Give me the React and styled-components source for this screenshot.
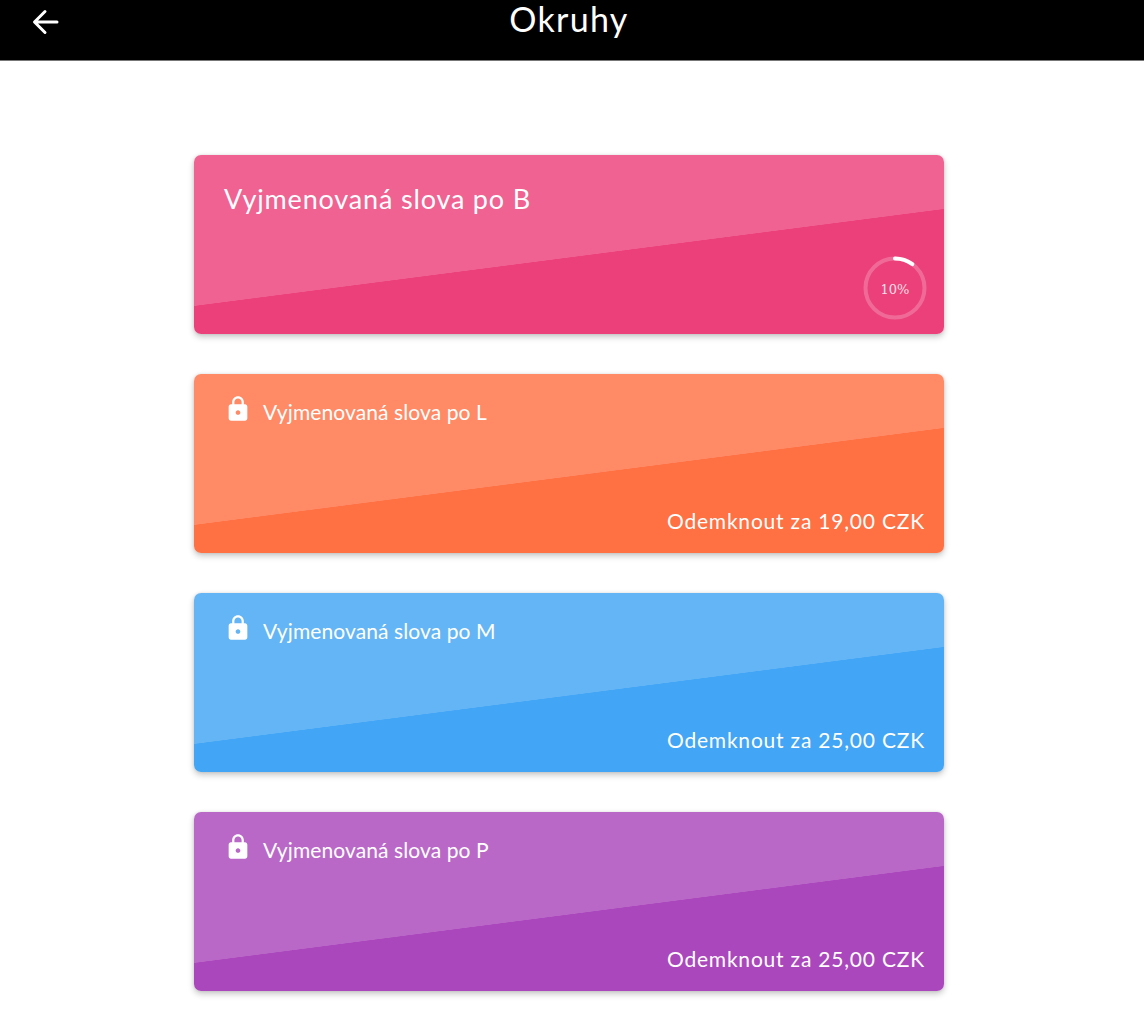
import React from 'react';
import styled, { createGlobalStyle } from 'styled-components';

const Global = createGlobalStyle`
  html, body { margin: 0; padding: 0; background: #ffffff; }
  body { font-family: Lato, "Noto Sans", sans-serif; }
`;

const Page = styled.div`
  min-height: 1011px;
  display: flex;
  flex-direction: column;
`;

const Header = styled.header`
  height: 61px;
  box-sizing: border-box;
  display: grid;
  grid-template-columns: 80px 1fr 86px;
  background: #000000;
  border-bottom: 1px solid #777777;
  color: #ffffff;
`;

const BackButton = styled.button`
  display: flex;
  align-items: flex-start;
  padding: 9px 0 0 32px;
  border: 0;
  background: none;
  color: inherit;
`;

const Title = styled.h1`
  margin: 0;
  text-align: center;
  font-size: 34px;
  line-height: 38px;
  font-weight: 400;
  letter-spacing: 1.3px;
`;

const Content = styled.main`
  padding: 94px 6px 0 0;
`;

const List = styled.div`
  width: 750px;
  margin: 0 auto;
  display: flex;
  flex-direction: column;
  gap: 40px;
`;

const Card = styled.article`
  height: 179px;
  box-sizing: border-box;
  padding: ${(p) => (p.$locked ? '18px 19px 18px 30px' : '25px 17px 14px 30px')};
  display: flex;
  flex-direction: column;
  justify-content: space-between;
  border-radius: 7px;
  color: #ffffff;
  background: linear-gradient(
    -7.37deg,
    ${(p) => p.$dark} 45.2%,
    ${(p) => p.$light} 45.4%
  );
  box-shadow: 0 3px 6px rgba(0, 0, 0, 0.22), 0 0 3px rgba(0, 0, 0, 0.1);
`;

const CardName = styled.h2`
  margin: 0;
  font-size: 27px;
  line-height: 38px;
  font-weight: 400;
  letter-spacing: 0.83px;
`;

const LockedRow = styled.div`
  display: flex;
  align-items: center;
  gap: 11px;
`;

const LockedName = styled.h2`
  margin: 0;
  padding-top: 6px;
  font-size: 21px;
  line-height: 28px;
  font-weight: 400;
  letter-spacing: 0.1px;
`;

const Price = styled.div`
  align-self: flex-end;
  font-size: 21px;
  line-height: 28px;
  letter-spacing: 0.8px;
`;

const RingWrap = styled.div`
  align-self: flex-end;
  position: relative;
  width: 64px;
  height: 64px;
`;

const RingLabel = styled.span`
  position: absolute;
  inset: 2px 0 0;
  display: flex;
  align-items: center;
  justify-content: center;
  font-family: "DejaVu Serif", "Liberation Serif", serif;
  font-size: 13px;
  color: rgba(255, 255, 255, 0.85);
`;

const ArrowIcon = () => (
  <svg width="28" height="26" viewBox="0 0 28 26" fill="none" stroke="currentColor" strokeWidth="3" strokeLinecap="round" strokeLinejoin="round">
    <path d="M25 13H3M13 2.5 2.5 13 13 23.5" />
  </svg>
);

const LockIcon = () => (
  <svg width="28" height="28" viewBox="0 0 24 24" fill="currentColor">
    <path d="M18 8h-1V6c0-2.76-2.24-5-5-5S7 3.24 7 6v2H6c-1.1 0-2 .9-2 2v10c0 1.1.9 2 2 2h12c1.1 0 2-.9 2-2V10c0-1.1-.9-2-2-2zm-6 9c-1.1 0-2-.9-2-2s.9-2 2-2 2 .9 2 2-.9 2-2 2zm3.1-9H8.9V6c0-1.71 1.39-3.1 3.1-3.1 1.71 0 3.1 1.39 3.1 3.1v2z" />
  </svg>
);

const ProgressRing = ({ value }) => {
  const r = 29.5;
  const length = 2 * Math.PI * r;
  return (
    <RingWrap>
      <svg width="64" height="64" viewBox="0 0 64 64" fill="none">
        <circle cx="32" cy="32" r={r} stroke="rgba(255,255,255,0.22)" strokeWidth="4" />
        <circle
          cx="32"
          cy="32"
          r={r}
          stroke="#ffffff"
          strokeWidth="4"
          strokeLinecap="round"
          strokeDasharray={`${(length * value) / 100} ${length}`}
          transform="rotate(-90 32 32)"
        />
      </svg>
      <RingLabel>{value}%</RingLabel>
    </RingWrap>
  );
};

const topics = [
  { id: 'l', name: 'Vyjmenovaná slova po L', price: '19,00', light: '#ff8a65', dark: '#ff7043' },
  { id: 'm', name: 'Vyjmenovaná slova po M', price: '25,00', light: '#64b5f6', dark: '#42a5f5' },
  { id: 'p', name: 'Vyjmenovaná slova po P', price: '25,00', light: '#ba68c8', dark: '#ab47bc' },
];

export default function App() {
  return (
    <Page>
      <Global />
      <Header>
        <BackButton aria-label="Zpět">
          <ArrowIcon />
        </BackButton>
        <Title>Okruhy</Title>
      </Header>
      <Content>
        <List>
          <Card $light="#f06292" $dark="#ec407a">
            <CardName>Vyjmenovaná slova po B</CardName>
            <ProgressRing value={10} />
          </Card>
          {topics.map((t) => (
            <Card key={t.id} $locked $light={t.light} $dark={t.dark}>
              <LockedRow>
                <LockIcon />
                <LockedName>{t.name}</LockedName>
              </LockedRow>
              <Price>Odemknout za {t.price} CZK</Price>
            </Card>
          ))}
        </List>
      </Content>
    </Page>
  );
}
